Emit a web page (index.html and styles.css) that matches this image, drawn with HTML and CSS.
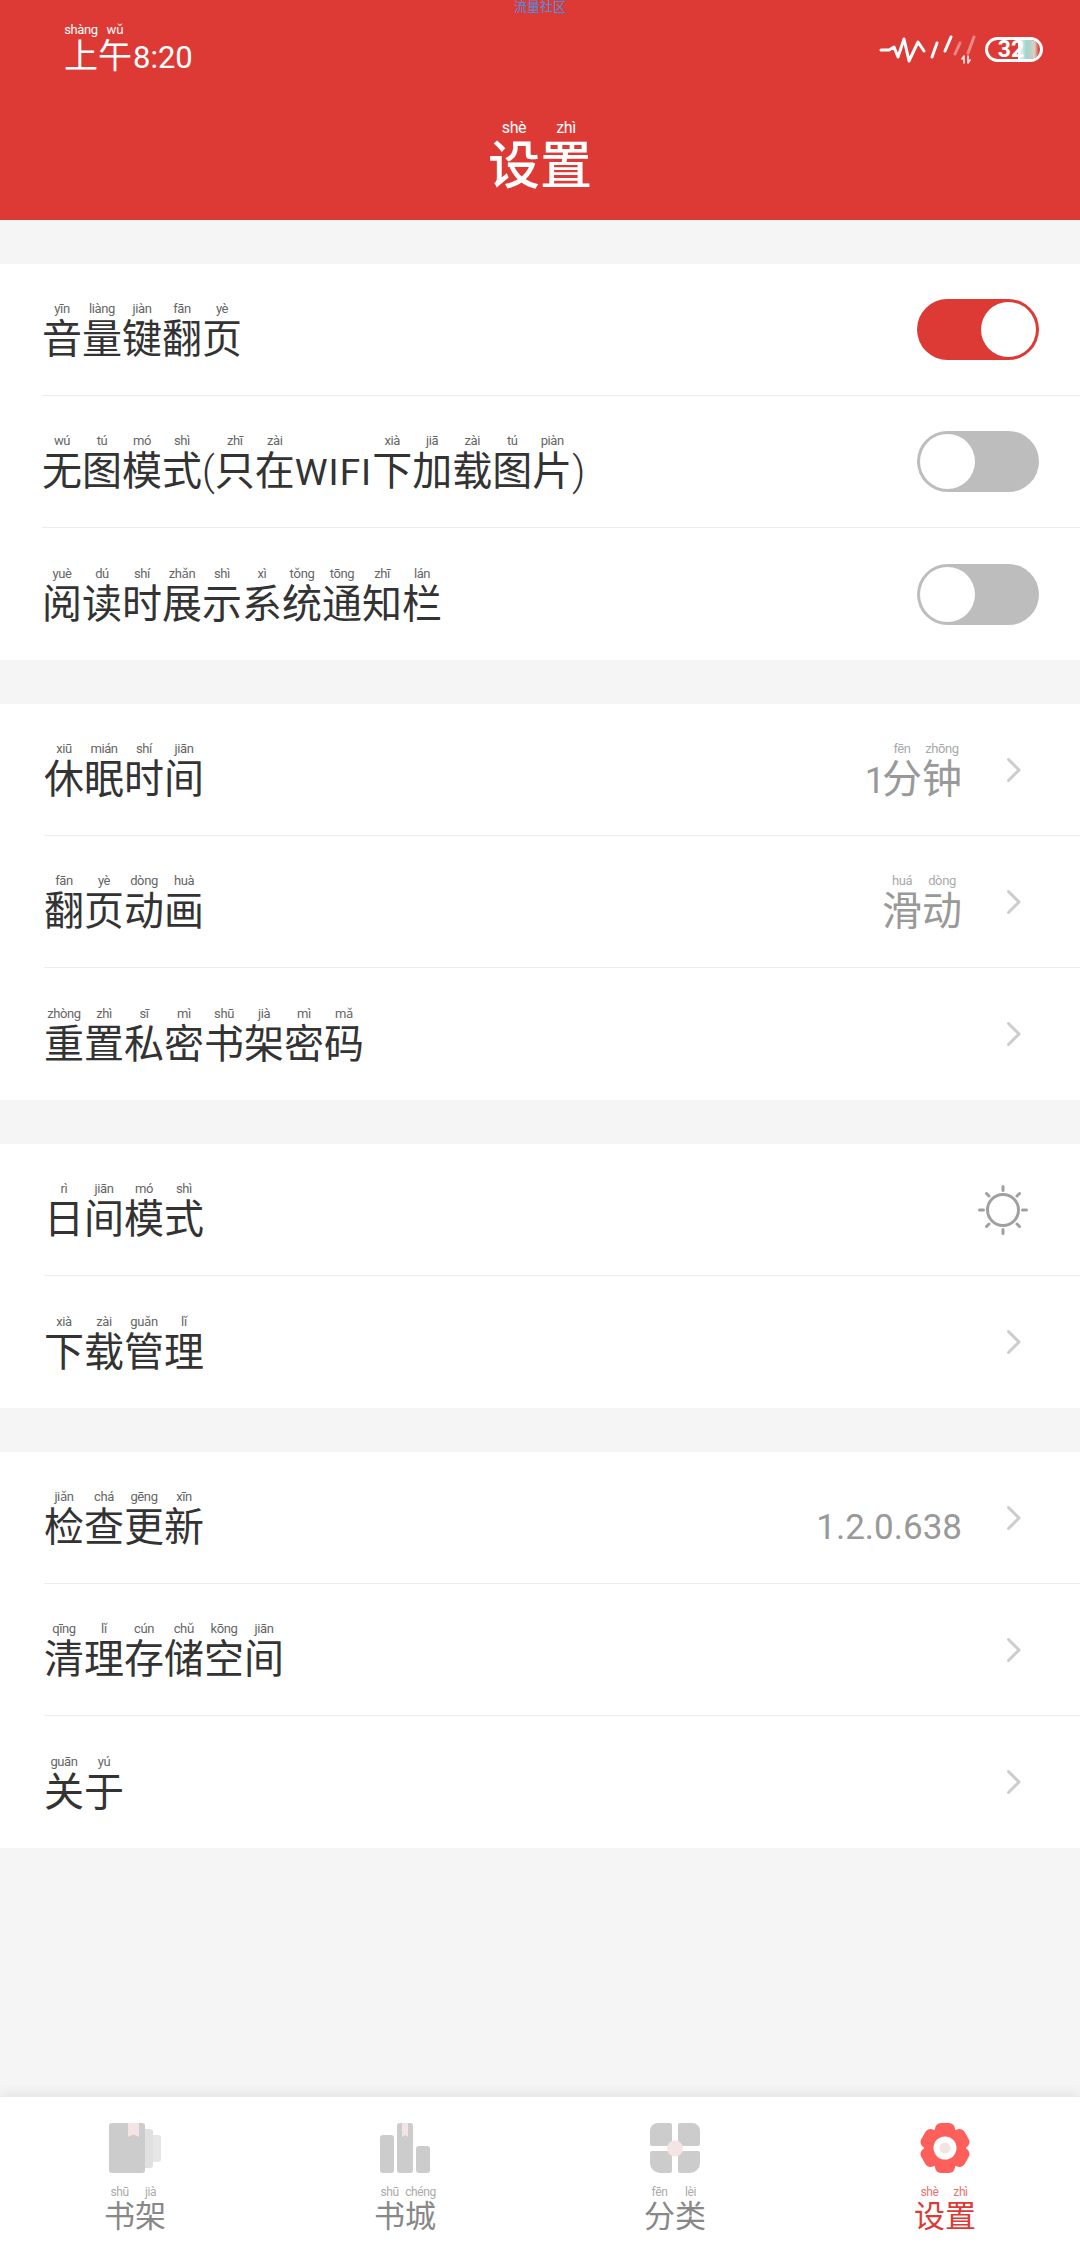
FILE: index.html
```html
<!DOCTYPE html>
<html lang="zh-CN">
<head>
    <meta charset="UTF-8">
    <meta name="viewport" content="width=device-width, initial-scale=1.0">
    <title>设置</title>
    <link rel="stylesheet" href="styles.css">
</head>
<body>
    <header class="header">
        <div class="carrier">流量社区</div>
        <div class="status">
            <div class="clock"><ruby>上<rt>shàng</rt></ruby><ruby>午<rt>wǔ</rt></ruby><span class="clock-time">8:20</span></div>
            <svg class="signal" width="97" height="32" viewBox="878 30 97 32" fill="none" stroke="#fff" stroke-width="3" stroke-linecap="round" stroke-linejoin="round">
                <polyline points="880,47 888,47 893,44 897,54 903,36 908,58 917,39 923,48"/>
                <line x1="931" y1="54" x2="936" y2="40"/>
                <line x1="944" y1="48" x2="950" y2="34"/>
                <line x1="954" y1="51" x2="959" y2="40" opacity="0.4"/>
                <line x1="967" y1="50" x2="973" y2="34" opacity="0.4"/>
                <path d="M963 53v7M961 56l2 -3M967 53v7M967 60l2 -3" stroke-width="1.6" opacity="0.9"/>
            </svg>
            <div class="battery"><span class="battery-level"></span><span class="battery-text">32</span></div>
        </div>
        <h1 class="title"><ruby>设<rt>shè</rt></ruby><ruby>置<rt>zhì</rt></ruby></h1>
    </header>

    <main class="content">
        <section class="group group-first">
            <div class="row">
                <div class="label"><ruby>音<rt>yīn</rt></ruby><ruby>量<rt>liàng</rt></ruby><ruby>键<rt>jiàn</rt></ruby><ruby>翻<rt>fān</rt></ruby><ruby>页<rt>yè</rt></ruby></div>
                <div class="toggle on"></div>
            </div>
            <div class="row">
                <div class="label"><ruby>无<rt>wú</rt></ruby><ruby>图<rt>tú</rt></ruby><ruby>模<rt>mó</rt></ruby><ruby>式<rt>shì</rt></ruby><span class="paren">(</span><ruby>只<rt>zhī</rt></ruby><ruby>在<rt>zài</rt></ruby><span class="latin">WIFI</span><ruby>下<rt>xià</rt></ruby><ruby>加<rt>jiā</rt></ruby><ruby>载<rt>zài</rt></ruby><ruby>图<rt>tú</rt></ruby><ruby>片<rt>piàn</rt></ruby><span class="paren">)</span></div>
                <div class="toggle"></div>
            </div>
            <div class="row">
                <div class="label"><ruby>阅<rt>yuè</rt></ruby><ruby>读<rt>dú</rt></ruby><ruby>时<rt>shí</rt></ruby><ruby>展<rt>zhǎn</rt></ruby><ruby>示<rt>shì</rt></ruby><ruby>系<rt>xì</rt></ruby><ruby>统<rt>tǒng</rt></ruby><ruby>通<rt>tōng</rt></ruby><ruby>知<rt>zhī</rt></ruby><ruby>栏<rt>lán</rt></ruby></div>
                <div class="toggle"></div>
            </div>
        </section>

        <section class="group">
            <div class="row">
                <div class="label"><ruby>休<rt>xiū</rt></ruby><ruby>眠<rt>mián</rt></ruby><ruby>时<rt>shí</rt></ruby><ruby>间<rt>jiān</rt></ruby></div>
                <div class="value"><span class="digit">1</span><ruby>分<rt>fēn</rt></ruby><ruby>钟<rt>zhōng</rt></ruby></div>
                <svg class="chevron" width="14" height="24" viewBox="0 0 14 24"><polyline points="1.5,1.5 12,12 1.5,22.5"/></svg>
            </div>
            <div class="row">
                <div class="label"><ruby>翻<rt>fān</rt></ruby><ruby>页<rt>yè</rt></ruby><ruby>动<rt>dòng</rt></ruby><ruby>画<rt>huà</rt></ruby></div>
                <div class="value"><ruby>滑<rt>huá</rt></ruby><ruby>动<rt>dòng</rt></ruby></div>
                <svg class="chevron" width="14" height="24" viewBox="0 0 14 24"><polyline points="1.5,1.5 12,12 1.5,22.5"/></svg>
            </div>
            <div class="row">
                <div class="label"><ruby>重<rt>zhòng</rt></ruby><ruby>置<rt>zhì</rt></ruby><ruby>私<rt>sī</rt></ruby><ruby>密<rt>mì</rt></ruby><ruby>书<rt>shū</rt></ruby><ruby>架<rt>jià</rt></ruby><ruby>密<rt>mì</rt></ruby><ruby>码<rt>mǎ</rt></ruby></div>
                <svg class="chevron" width="14" height="24" viewBox="0 0 14 24"><polyline points="1.5,1.5 12,12 1.5,22.5"/></svg>
            </div>
        </section>

        <section class="group">
            <div class="row">
                <div class="label"><ruby>日<rt>rì</rt></ruby><ruby>间<rt>jiān</rt></ruby><ruby>模<rt>mó</rt></ruby><ruby>式<rt>shì</rt></ruby></div>
                <svg class="sun" width="50" height="50" viewBox="0 0 50 50">
                    <circle cx="25" cy="25" r="15.5"/>
                    <path d="M25 1.5v4M25 44.500v4M1.500 25h4M44.500 25h4M8.500 8.500l2.500 2.500M39 39l2.500 2.500M8.500 41.500l2.500 -2.500M39 11l2.500 -2.500"/>
                </svg>
            </div>
            <div class="row">
                <div class="label"><ruby>下<rt>xià</rt></ruby><ruby>载<rt>zài</rt></ruby><ruby>管<rt>guǎn</rt></ruby><ruby>理<rt>lǐ</rt></ruby></div>
                <svg class="chevron" width="14" height="24" viewBox="0 0 14 24"><polyline points="1.5,1.5 12,12 1.5,22.5"/></svg>
            </div>
        </section>

        <section class="group">
            <div class="row">
                <div class="label"><ruby>检<rt>jiǎn</rt></ruby><ruby>查<rt>chá</rt></ruby><ruby>更<rt>gēng</rt></ruby><ruby>新<rt>xīn</rt></ruby></div>
                <div class="value version">1.2.0.638</div>
                <svg class="chevron" width="14" height="24" viewBox="0 0 14 24"><polyline points="1.5,1.5 12,12 1.5,22.5"/></svg>
            </div>
            <div class="row">
                <div class="label"><ruby>清<rt>qīng</rt></ruby><ruby>理<rt>lǐ</rt></ruby><ruby>存<rt>cún</rt></ruby><ruby>储<rt>chǔ</rt></ruby><ruby>空<rt>kōng</rt></ruby><ruby>间<rt>jiān</rt></ruby></div>
                <svg class="chevron" width="14" height="24" viewBox="0 0 14 24"><polyline points="1.5,1.5 12,12 1.5,22.5"/></svg>
            </div>
            <div class="row">
                <div class="label"><ruby>关<rt>guān</rt></ruby><ruby>于<rt>yú</rt></ruby></div>
                <svg class="chevron" width="14" height="24" viewBox="0 0 14 24"><polyline points="1.5,1.5 12,12 1.5,22.5"/></svg>
            </div>
        </section>
    </main>

    <nav class="tabbar">
        <div class="tab">
            <svg class="tab-icon" width="52" height="50" viewBox="0 0 52 50">
                <rect x="36" y="12" width="16" height="27" rx="3" fill="#e6e6e6"/>
                <rect x="30" y="6" width="14" height="39" rx="3" fill="#e0e0e0"/>
                <rect x="0" y="0" width="36" height="50" rx="3" fill="#cccccc"/>
                <path d="M19 0h11v14l-5.500 -2.500l-5.500 2.500z" fill="#f5e4e4"/>
            </svg>
            <div class="tab-label"><ruby>书<rt>shū</rt></ruby><ruby>架<rt>jià</rt></ruby></div>
        </div>
        <div class="tab">
            <svg class="tab-icon" width="50" height="50" viewBox="0 0 50 50">
                <rect x="0" y="12" width="14" height="38" rx="3" fill="#cccccc"/>
                <rect x="17" y="0" width="16" height="50" rx="3" fill="#cccccc"/>
                <rect x="36" y="23" width="14" height="27" rx="3" fill="#cccccc"/>
                <path d="M22 0h6v14l-3 -2l-3 2z" fill="#f5e4e4"/>
            </svg>
            <div class="tab-label"><ruby>书<rt>shū</rt></ruby><ruby>城<rt>chéng</rt></ruby></div>
        </div>
        <div class="tab">
            <svg class="tab-icon" width="50" height="50" viewBox="0 0 50 50">
                <path d="M8 0h12a2 2 0 0 1 2 2v19a2 2 0 0 1 -2 2h-18a2 2 0 0 1 -2 -2v-13a8 8 0 0 1 8 -8z" fill="#cccccc"/>
                <path d="M30 0h12a8 8 0 0 1 8 8v13a2 2 0 0 1 -2 2h-18a2 2 0 0 1 -2 -2v-19a2 2 0 0 1 2 -2z" fill="#cccccc"/>
                <path d="M2 28h18a2 2 0 0 1 2 2v18a2 2 0 0 1 -2 2h-10a10 10 0 0 1 -10 -10v-10a2 2 0 0 1 2 -2z" fill="#cccccc"/>
                <path d="M30 28h18a2 2 0 0 1 2 2v10a10 10 0 0 1 -10 10h-10a2 2 0 0 1 -2 -2v-18a2 2 0 0 1 2 -2z" fill="#cccccc"/>
                <circle cx="25" cy="25.500" r="8" fill="#f5e4e4"/>
            </svg>
            <div class="tab-label"><ruby>分<rt>fēn</rt></ruby><ruby>类<rt>lèi</rt></ruby></div>
        </div>
        <div class="tab active">
            <svg class="tab-icon" width="50" height="50" viewBox="0 0 50 50" fill="#ff5f5b">
                <circle cx="25" cy="25" r="21"/>
                <rect x="15" y="0" width="20" height="14" rx="6"/>
                <rect x="15" y="0" width="20" height="14" rx="6" transform="rotate(60 25 25)"/>
                <rect x="15" y="0" width="20" height="14" rx="6" transform="rotate(120 25 25)"/>
                <rect x="15" y="0" width="20" height="14" rx="6" transform="rotate(180 25 25)"/>
                <rect x="15" y="0" width="20" height="14" rx="6" transform="rotate(240 25 25)"/>
                <rect x="15" y="0" width="20" height="14" rx="6" transform="rotate(300 25 25)"/>
                <circle cx="25" cy="25" r="11.500" fill="#fff"/>
                <circle cx="25" cy="25" r="5.500" fill="#f3e4e4"/>
            </svg>
            <div class="tab-label"><ruby>设<rt>shè</rt></ruby><ruby>置<rt>zhì</rt></ruby></div>
        </div>
    </nav>
</body>
</html>
```

FILE: styles.css
```css
* {
    margin: 0;
    padding: 0;
    box-sizing: border-box;
    font-family: Roboto, "Noto Sans CJK SC", sans-serif;
}

body {
    display: flex;
    flex-direction: column;
    height: 2248px;
    background-color: #f5f5f5;
    overflow: hidden;
}

ruby {
    ruby-align: center;
}

rt {
    font-size: 13px;
    letter-spacing: -0.4px;
    font-weight: 400;
    padding-bottom: 1px;
}

/* header */
.header {
    height: 220px;
    background-color: #dd3a35;
    color: #fff;
    display: flex;
    flex-direction: column;
    align-items: center;
}

.carrier {
    height: 13px;
    font-size: 13px;
    line-height: 13px;
    color: #4a90e2;
}

.status {
    width: 100%;
    display: flex;
    align-items: center;
    padding: 9px 37px 0 64px;
}

.clock {
    font-size: 34px;
    line-height: 42px;
    flex: 1;
}

.clock-time {
    font-size: 31px;
    margin-left: 1px;
}

.signal {
    margin-right: 9px;
    margin-bottom: 3px;
}

.battery {
    position: relative;
    width: 58px;
    height: 25px;
    margin-bottom: 3px;
    border: 3px solid #fff;
    border-radius: 13px;
    display: flex;
    align-items: center;
    justify-content: center;
    overflow: hidden;
}

.battery-level {
    position: absolute;
    left: 30px;
    top: 0;
    bottom: 0;
    width: 21px;
    background: linear-gradient(90deg, #ffffff, #9fd4d0 40%, #d9cfc0 80%, #dd3a35);
}

.battery-text {
    position: relative;
    font-size: 23px;
    font-weight: 700;
    margin-right: 6px;
}

.title {
    font-size: 52px;
    line-height: 56px;
    font-weight: 500;
    margin-top: 39px;
}

.title rt {
    font-size: 16px;
}

/* settings list */
.content {
    flex: 1;
}

.group {
    margin-top: 44px;
    background-color: #fff;
    padding-left: 44px;
}

.group-first {
    padding-left: 42px;
}

.row {
    height: 132px;
    display: flex;
    align-items: center;
    border-bottom: 1px solid #ececec;
}

.row:last-child {
    border-bottom: none;
}

.label,
.value {
    font-size: 40px;
    line-height: 44px;
    padding-top: 21px;
    color: #333;
}

.label {
    flex: 1;
}

.label rt {
    color: #666;
}

.paren {
    font-weight: 300;
}

.latin {
    font-size: 37px;
    letter-spacing: 1px;
}

.value {
    color: #999;
    margin-right: 45px;
}

.value rt {
    color: #aaa;
}

.digit {
    font-size: 36px;
    letter-spacing: -3px;
}

.version {
    font-size: 35px;
    padding-top: 20px;
}

.chevron {
    margin-right: 59px;
    fill: none;
    stroke: #cccccc;
    stroke-width: 3;
    stroke-linecap: round;
    stroke-linejoin: round;
}

.sun {
    margin-right: 52px;
    fill: none;
    stroke: #a0a0a0;
    stroke-width: 3;
    stroke-linecap: round;
}

.toggle {
    position: relative;
    width: 122px;
    height: 61px;
    margin-right: 41px;
    border-radius: 31px;
    background-color: #bdbdbd;
}

.toggle::after {
    content: "";
    position: absolute;
    top: 3px;
    left: 3px;
    width: 55px;
    height: 55px;
    border-radius: 50%;
    background-color: #fff;
}

.toggle.on {
    background-color: #dd3a35;
}

.toggle.on::after {
    left: 64px;
}

/* bottom tabs */
.tabbar {
    height: 151px;
    background-color: #fff;
    display: grid;
    grid-template-columns: repeat(4, 1fr);
    box-shadow: 0 -4px 10px rgba(0, 0, 0, 0.07);
}

.tab {
    display: flex;
    flex-direction: column;
    align-items: center;
    padding-top: 26px;
}

.tab-label {
    font-size: 31px;
    line-height: 34px;
    margin-top: 14px;
    color: #888;
}

.tab-label rt {
    font-size: 12px;
    padding-bottom: 0;
    color: #aaa;
}

.tab.active .tab-label {
    color: #dd3a35;
}

.tab.active .tab-label rt {
    color: #e87370;
}
```
